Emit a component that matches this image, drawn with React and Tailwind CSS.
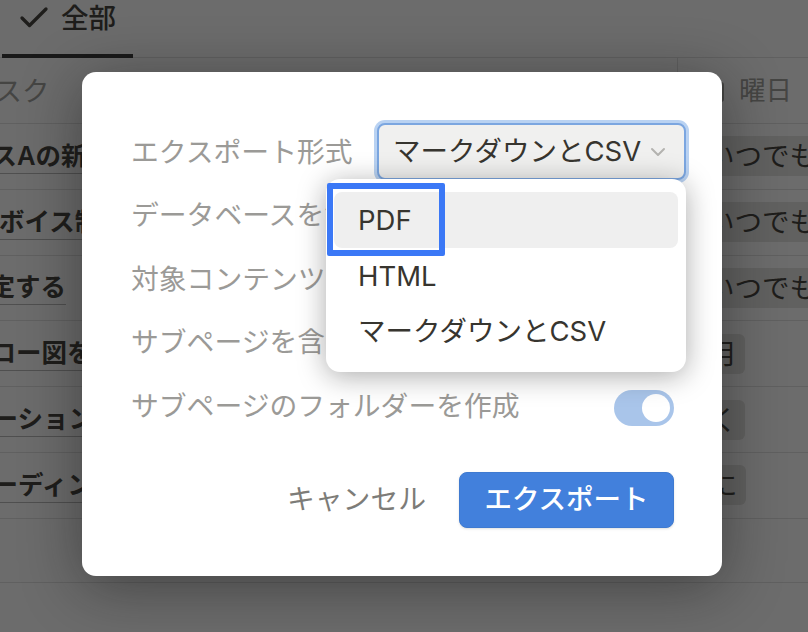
import React from 'react';
import { Check, ChevronDown, Calendar } from 'lucide-react';

const tasks = [
  { name: 'サービスAの新機能', shift: 'ml-[-85px]', day: 'いつでも', pill: 'ml-[22px]' },
  { name: 'インボイス制作', shift: 'ml-[-52px]', day: 'いつでも', pill: 'ml-[22px]' },
  { name: '予定する', shift: 'ml-[-36px]', day: 'いつでも', pill: 'ml-[22px]' },
  { name: 'フロー図を作成', shift: 'ml-[-35px]', day: '毎月', pill: 'ml-[-3px]' },
  { name: 'プレゼンテーション', shift: 'ml-[-135px]', day: '近く', pill: 'ml-[-3px]' },
  { name: 'オンボーディング', shift: 'ml-[-84px]', day: '最後に', pill: 'ml-[-30px]' },
];

const options = ['PDF', 'HTML', 'マークダウンとCSV'];

const Toggle = () => (
  <div className="mt-[4px] flex h-9 w-[60px] items-center justify-end rounded-full bg-[#a9c5ea] pr-1">
    <div className="h-7 w-7 rounded-full bg-white" />
  </div>
);

const Row = ({ label, children }) => (
  <div className="flex h-[63.5px] items-center justify-between">
    <span className="pt-[2px] text-[27.8px] text-[#9b9a97]">{label}</span>
    {children}
  </div>
);

const App = () => {
  return (
    <div className="relative h-[632px] w-[808px] overflow-hidden bg-white font-['Inter','Noto_Sans_CJK_JP',sans-serif] text-[#37352f]">
      {/* 後ろのテーブル */}
      <div className="flex h-[58px] border-b border-[#e0e0e0] pl-0.5">
        <div className="flex h-[58px] w-[131px] items-start gap-[9px] border-b-4 border-[#2a2a2a] pl-[14px] pt-0">
          <Check size={36} strokeWidth={2.2} />
          <span className="text-[27.5px] font-medium leading-[36px]">全部</span>
        </div>
      </div>
      <div className="flex h-[66px] border-b border-[#e0e0e0]">
        <div className="w-[677px] shrink-0 overflow-hidden">
          <span className="ml-[-33px] block text-[27.5px] leading-[66px] text-[#9b9a97]">タスク</span>
        </div>
        <div className="flex flex-1 items-center border-l border-[#e0e0e0] pl-[24px] text-[#9b9a97]">
          <Calendar size={24} className="shrink-0" />
          <span className="ml-[13px] whitespace-nowrap text-[26.5px]">曜日</span>
        </div>
      </div>
      {tasks.map((task) => (
        <div key={task.name} className="flex h-[65.8px] items-center overflow-hidden border-b border-[#e0e0e0]">
          <div className="w-[677px] shrink-0 overflow-hidden">
            <span className={`${task.shift} inline-block whitespace-nowrap border-b border-[#b5b5b5] text-[25.5px] font-semibold leading-[34px]`}>
              {task.name}
            </span>
          </div>
          <span className={`${task.pill} whitespace-nowrap rounded-md bg-[#e3e2e0] pl-2 pr-2 text-[27.5px] leading-[40px]`}>
            {task.day}
          </span>
        </div>
      ))}
      <div className="h-[64px] border-b border-[#e0e0e0]" />

      {/* オーバーレイ */}
      <div className="absolute inset-0 bg-[rgba(15,15,15,0.61)] pl-[82px] pt-[72px]">
        <div className="relative h-[504px] w-[640px] rounded-[14px] bg-white pl-[49px] pr-[48px] pt-[48px] shadow-[0_10px_60px_rgba(15,15,15,0.45)]">
          <Row label="エクスポート形式">
            <div className="-mr-3 flex h-[57px] w-[309px] items-center justify-between rounded-lg border-2 border-[#7ba6e0] bg-[#f0f0ef] pl-[14px] pr-[14px] shadow-[0_0_0_3px_#b9d2f2]">
              <span className="whitespace-nowrap text-[27.5px] text-[#37352f]">マークダウンとCSV</span>
              <ChevronDown size={24} className="shrink-0 text-[#b4b3b0]" />
            </div>
          </Row>
          <Row label="データベースを含む" />
          <Row label="対象コンテンツ" />
          <Row label="サブページを含む" />
          <Row label="サブページのフォルダーを作成">
            <Toggle />
          </Row>

          <div className="mt-[34px] flex items-center justify-end gap-[33px]">
            <span className="text-[27.8px] text-[#7d7c78]">キャンセル</span>
            <button className="flex h-14 w-[215px] items-center justify-center rounded-lg border border-[#3f7ad0] bg-[#4280dc] text-[27.5px] font-medium text-white shadow-sm">
              エクスポート
            </button>
          </div>

          {/* ドロップダウン */}
          <div className="absolute left-[244px] top-[107px] h-[193px] w-[360px] rounded-[14px] bg-white px-2 pt-[13px] shadow-[0_4px_28px_rgba(15,15,15,0.35)]">
            {options.map((option, i) => (
              <div
                key={option}
                className={`flex h-[55.5px] items-center rounded-lg pl-[24px] pt-[2px] text-[27.5px] text-[#37352f] ${i === 0 ? 'bg-[#efefef]' : ''}`}
              >
                {option}
              </div>
            ))}
            <div className="absolute left-[1px] top-[4px] h-[73px] w-[118px] rounded-[2px] border-[6px] border-[#3b78f6]" />
          </div>
        </div>
      </div>
    </div>
  );
};

export default App;
